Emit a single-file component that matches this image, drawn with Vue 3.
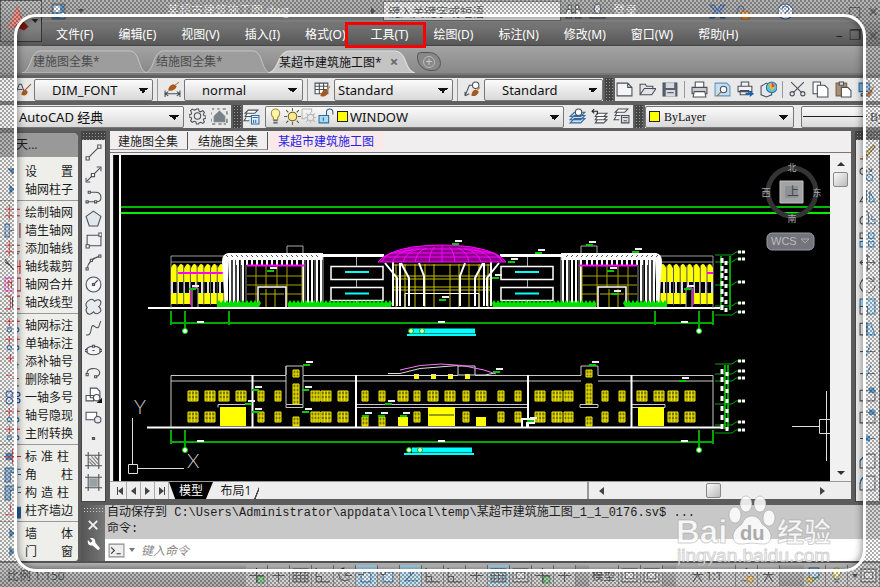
<script setup>
import { h, ref } from 'vue'

const D = '#4a4f58'
const B = '#1d78c4'
// Each glyph is a list of [path, stroke, fill] on a 16 by 16 grid.
const glyphs = {
  abrush: [['M1 11L4 3h2l3 8M3 8h4', D, 'none'], ['M15 3L9 9', '#9a5a20', 'none'], ['M10 8q-4 1-4 5q5 2 6-3z', 'none', '#a8581c']],
  dim: [['M1 9v6M15 9v6M1 12h14M4 10l-3 2 3 2M12 10l3 2-3 2', D, 'none'], ['M14 1L9 5', '#b9803a', 'none'], ['M9 3q-5 1-5 6q6 1 8-4z', 'none', '#a8581c']],
  table: [['M1 2h12v10H1zM1 5h12M1 8h12M5 2v10M9 2v10', D, '#fff'], ['M15 5l-4 5', '#b9803a', 'none'], ['M11 8q-4 1-5 6q6 2 7-4z', 'none', '#a8581c']],
  leader: [['M1 14L5 4h4M1 14v-4M1 14l4-2', D, 'none'], ['M8 4a3 3 0 1 0 6 0a3 3 0 1 0-6 0', D, '#fff'], ['M15 6l-4 4', '#b9803a', 'none'], ['M11 8q-4 1-4 6q5 1 7-4z', 'none', '#a8581c']],
  fresh: [['M1 2h10l4 4v8H1zM11 2v4h4', D, '#f4f5f8']],
  open: [['M1 13V3h5l1 2h6v3M1 13l4-6h11l-4 6z', D, '#e2e4e8']],
  save: [['M1 2h13v12H1z', D, '#59616e'], ['M4 2h7v4H4zM4 9h8v5H4z', '#d5dae3', '#d5dae3'], ['M5 11h6', D, 'none']],
  print: [['M4 6V1h8v5', D, '#fff'], ['M1 6h14v6H1z', D, '#c8ccd2'], ['M3 10h10l1 5H2z', D, '#fff']],
  preview: [['M1 2h11l3 3v9H1z', '#6b93b8', '#c3dff2'], ['M6 8a3 3 0 1 0 6 0a3 3 0 1 0-6 0', D, '#eef6ff'], ['M7 10l-4 4', '#9a6a30', 'none']],
  publish: [['M4 5V1h7v4M1 5h13v5H1zM3 9h8v4H3z', D, '#f1f2f4'], ['M8 11h4V9l4 3-4 3v-2H8z', 'none', '#1761b2']],
  globe: [['M1 5l5-3 5 3v8l-5 2-5-2z', D, '#e6e9ec'], ['M6 6a5 5 0 1 0 10 0a5 5 0 1 0-10 0', '#28729d', '#62c2da'], ['M8 3l4-1 2 4-3 3z', 'none', '#f2bd24'], ['M11 1l3 4-3 1z', 'none', '#de4432']],
  cut: [['M2 1l10 10M14 1L4 11', D, 'none'], ['M1 12a2 2 0 1 0 4 0a2 2 0 1 0-4 0M11 12a2 2 0 1 0 4 0a2 2 0 1 0-4 0', D, 'none']],
  copy: [['M1 1h7v11H1z', D, '#fff'], ['M5 4h7l3 3v8H5z', D, '#fff']],
  paste: [['M1 2h10v12H1z', '#7a6249', '#a68f72'], ['M4 1h4v3H4z', D, '#ddd'], ['M6 6h6l3 3v6H6z', D, '#fff']],
  match: [['M1 2h10v8H1z', '#2e6aa8', '#7fb2df'], ['M3 12h8v2H3z', D, '#ddd'], ['M15 5l-5 7', '#a8581c', 'none'], ['M12 8q-4 2-4 7q5-1 6-6z', 'none', '#a8581c']],
  gear: [['M7 1h2l.5 2 1.5.6L13 2.500l1.500 1.500-1 2 .5 1 2 .5v2l-2 .5-.5 1 1 2-1.500 1.500-2-1-1.500.5L9 15H7l-.5-2-1.500-.5-2 1L1.500 12l1-2L2 9l-2-.5v-2L2 6l.5-1.500-1-2L3 1l2 1 1.500-.5z', D, 'none'], ['M5 7.500a3 3 0 1 0 6 0a3 3 0 1 0-6 0', D, 'none']],
  house: [['M3 8l5-5 5 5v5H3z', '#7a8189', '#7a8189'], ['M1 1h2M6 1h2M11 1h3M0 4v2M0 10v3M15 3v3M15 10v4M1 15h3M7 15h3M12 15h2', D, 'none']],
  layers: [['M5 2h9l-3 3H2zM4 5l-2 3h6M3 9l-2 3h5', D, '#fff'], ['M8 7h7v8H8z', '#2d6da8', '#e7f2fc'], ['M9 9h5M10 11v3M12 11v3', '#2d6da8', 'none']],
  bulb: [['M4 5a4 4 0 1 1 8 0q0 2-2 4v2H6V9Q4 7 4 5z', '#9b8a47', '#fff6a0'], ['M6 12h4M6 14h4', D, 'none']],
  sun: [['M4 8a4 4 0 1 0 8 0a4 4 0 1 0-8 0', '#6c6230', '#ffe98a'], ['M8 0v3M8 13v3M0 8h3M13 8h3M2 2l2 2M12 12l2 2M14 2l-2 2M2 14l2-2', '#6c6230', 'none']],
  freeze: [['M1 1h9v3M1 1v9h3', '#b6b6b6', 'none'], ['M6 9a3 3 0 1 0 6 0a3 3 0 1 0-6 0M9 4v2M9 12v2M4 9h2M12 9h2M5 5l2 2M13 5l-2 2M5 13l2-2M13 13l-2-2', '#b6b6b6', 'none']],
  lock: [['M1 7h9v7H1z', '#2f6f9f', '#a9dbf4'], ['M8 7V4q0-3 3-3t3 3v2M5 9v3', '#2f5f80', 'none']],
  stackA: [['M5 10h10l-4 4H1zM5 7h10l-4 4H1zM5 4h10l-4 4H1z', '#38689b', '#bfe0f7'], ['M6 4a3 3 0 1 0 6 0a3 3 0 1 0-6 0', D, '#fff']],
  stackB: [['M6 11h9l-3 3H4zM6 8h9l-3 3H4zM6 5h9l-3 3H4z', D, '#fff'], ['M1 3h5v3M3 1L1 3l2 2', '#222', 'none']],
  stackC: [['M5 1h9l-3 3H2zM4 4l-2 3h5M3 8l-2 3h5', D, '#fff'], ['M8 7h7v7H8zM9 9h5M10 12h3', D, '#ddd']],
  line: [['M3 13L13 3', D, 'none'], ['M1 12h3v3H1zM12 1h3v3h-3z', D, '#fff']],
  xline: [['M2 14L14 2M1 11v4h4M11 1h4v4', D, 'none'], ['M6 7h3v3H6z', D, '#fff']],
  pline: [['M2 13h8M4 4h6q5 0 5 5q0 4-4 4', D, 'none'], ['M1 12h2v2H1zM9 12h2v2H9zM3 3h2v2H3z', D, '#fff']],
  polygon: [['M8 1l7 5-3 9H4L1 6z', D, '#e2e7ec']],
  rect: [['M2 3h13v10H2z', D, '#eef0f2'], ['M1 12h3v3H1zM13 1h3v3h-3z', D, '#fff']],
  arc: [['M2 14Q3 5 14 2', D, 'none'], ['M1 13h2v2H1zM5 5h2v2H5zM13 1h2v2h-2z', D, '#fff']],
  circle: [['M1 8a7 7 0 1 0 14 0a7 7 0 1 0-14 0', D, '#f3f5f6'], ['M8 8l4-4M7 7h2v2H7z', D, 'none']],
  cloud: [['M4 2q3-2 5 1q5-3 6 1q0 3-2 4q4 4 0 6q-3 2-5-1q-4 4-6 1q-2-3 0-5q-3-4 2-7z', D, '#e8ebee']],
  spline: [['M1 14C8 16 4 2 9 6S13 4 15 1', D, 'none']],
  ellipse: [['M1 8a7 4 0 1 0 14 0a7 4 0 1 0-14 0', D, '#f3f5f6'], ['M7 3h2v2H7zM0 7h2v2H0zM14 7h2v2h-2zM7 8h2', D, '#fff']],
  earc: [['M2 9a6 4 0 1 1 8 3', D, 'none'], ['M1 9h2v2H1zM9 11h2v2H9z', D, '#fff']],
  block: [['M5 2h6l3 3v6H5zM1 9h7v5H1z', D, '#fff'], ['M8 11a3 3 0 1 0 6 0a3 3 0 1 0-6 0', D, '#fff'], ['M16 11v5h-5z', 'none', '#111']],
  mblock: [['M1 4h10v7H1z', D, '#fff'], ['M9 11a3 3 0 1 0 6 0a3 3 0 1 0-6 0', D, '#e8ebee']],
  point: [['M7 7h2v2H7z', D, '#888']],
  hatch: [['M3 0v16M13 0v16M0 3h16M0 13h16', D, 'none'], ['M4 6l6 6M4 9l4 4M6 4l6 7M9 4l4 4', '#777', 'none']],
  grad: [['M3 0v16M13 0v16M0 3h16M0 13h16', D, 'none'], ['M4 4h8v8H4z', 'none', '#9ba0a5']],
  erase: [['M14 1L6 9l2 2 7-8z', '#7a6423', '#f4d479'], ['M1 14h6M4 12l2-2 2 2-2 2z', '#9a4b23', '#e39a71']],
  copyObj: [['M1 5a3 3 0 1 0 6 0a3 3 0 1 0-6 0M9 2l3 3M12 2v3H9', D, 'none'], ['M7 11a3 3 0 1 0 6 0a3 3 0 1 0-6 0', B, '#d6ecfb']],
  mirror: [['M7 3v10H1z', D, 'none'], ['M10 3v10h5z', B, '#d6ecfb']],
  offset: [['M1 10q0-4 4-4V3q4-4 4 3v7H5q-4 1-4-3z', D, 'none'], ['M8 13h7V9h-3V5', B, 'none']],
  array: [['M1 1h5v5H1z', D, 'none'], ['M9 1h5v5H9zM1 9h5v5H1zM9 9h5v5H9z', B, '#d6ecfb']],
  move: [['M8 1v14M1 8h14M6 3l2-2 2 2M6 13l2 2 2-2M3 6L1 8l2 2M13 6l2 2-2 2', D, 'none']],
  rotate: [['M13 4A7 7 0 1 0 15 9M14 1v4h-4', D, 'none']],
  scale: [['M1 1h14v14H8V8H1z', B, '#c5e5fa'], ['M1 8h7v7H1z', D, '#fff']],
  stretch: [['M1 3h6v11H1z', D, '#fff'], ['M8 3h3l4 11H8z', B, '#c5e5fa']],
  trim: [['M1 9h14', D, 'none'], ['M11 1L6 15', B, 'none']],
  breakAt: [['M1 4h14v10H1z', D, 'none'], ['M10 2h4v4h-4z', B, B]],
  chamfer: [['M1 15V8l6-6h8v13z', D, 'none'], ['M1 8l6-6', B, 'none']],
  fillet: [['M1 15V9q1-7 7-7h7v13z', D, 'none'], ['M1 9q1-7 7-7', B, 'none']],
  join: [['M1 8h5M11 8h4', D, 'none'], ['M6 6h4v4H6z', B, B]],
  axis: [['M1 5h14M1 11h14M5 1v14M11 1v14', '#e0202c', 'none']],
  axisAdd: [['M1 5h14M1 11h14M5 1v14', '#e0202c', 'none'], ['M11 1v14M9 13h5', '#208040', 'none']],
  wall: [['M1 2h4v12H1z', '#245f9d', '#b9d3ea'], ['M6 8h6M10 6v4M15 1v14', '#9a2a30', 'none']],
  knife: [['M1 1l8 10M1 4l5 3', '#222', 'none'], ['M12 2v13M15 2v13M10 8h6', '#e0202c', 'none']],
  merge: [['M1 2h9v12H1z', '#ff20e0', 'none'], ['M4 4v8M7 4v8M3 6h5M12 2h4v12h-4z', '#e0202c', 'none']],
  shift: [['M1 2h5v12H1M10 2h5M10 14h5', '#e0202c', 'none'], ['M8 3v10', '#222', 'none']],
  dimax: [['M5 1v8M12 1v8M1 4h14', '#e0202c', 'none'], ['M3 12a2 2 0 1 0 4 0a2 2 0 1 0-4 0M10 12a2 2 0 1 0 4 0a2 2 0 1 0-4 0', '#1d68a8', '#d8ecff']],
  plus: [['M6 1v8M2 5h9', '#f01020', 'none'], ['M10 11h4M12 9v6', '#208040', 'none']],
  minus: [['M2 4h5M8 7h6', '#f01020', 'none'], ['M11 9v5h3', '#208040', 'none']],
  multi: [['M2 5a3 3 0 1 0 6 0a3 3 0 1 0-6 0M2 11a3 3 0 1 0 6 0a3 3 0 1 0-6 0M11 5a2 2 0 1 0 4 0a2 2 0 1 0-4 0M11 11a2 2 0 1 0 4 0a2 2 0 1 0-4 0', '#143f9c', '#dbe8ff']],
  col: [['M2 5h5v6H2z', '#1d68a8', '#1d68a8'], ['M8 1v14M0 8h16', '#f01020', 'none']],
  corner: [['M1 2h11v4H6v9H1z', '#1d5d9c', '#7da8ce'], ['M13 3h3M13 8h3', '#1d5d9c', 'none']],
  align: [['M1 12h9V9', '#f01020', 'none'], ['M6 2v7', '#f01020', 'none'], ['M12 5h4v10h-4z', '#1d5d9c', '#1d5d9c']],
  tri: [['M5 3l5 5-5 5z', 'none', '#2867a8']],
  trid: [['M3 5h9l-4 6z', 'none', '#2867a8']],
  plusS: [['M8 1v14M1 8h14', '#333', 'none'], ['M9 9h6v6H9z', '#26823a', '#7cbf7c']],
  cross: [['M8 2v12M2 8h12', '#333', 'none']],
  grid: [['M1 2h14v12H1zM1 5h14M1 8h14M1 11h14M4 2v12M8 2v12M12 2v12', '#444', 'none']],
  ortho: [['M2 1v13h13M2 9h5v5', '#333', 'none']],
  polar: [['M8 1a6 6 0 1 0 5 10M8 8l6-6M8 8h7', '#333', 'none']],
  snap: [['M3 5h9v9H3z', '#1d68a8', '#cce9fb'], ['M1 3h4v4H1z', '#333', '#fff']],
  angle: [['M14 2L3 13h12', '#1d68a8', 'none'], ['M3 3h5v4', '#333', 'none']],
  quick: [['M1 2h14v12H1z', '#444', '#e4e4e4'], ['M4 5h8v6H4z', '#444', 'none']],
  person: [['M8 2v5L4 14M8 7l4 7M3 7h10', '#333', 'none']],
  star: [['M8 1l3 5M5 6l3-5M3 13h6', '#555', 'none'], ['M9 9h5v5H9z', '#d48b20', '#f6c15f']],
  sheet: [['M3 1h9v9H3z', '#245f9d', '#b8d7ef'], ['M2 11l4 3 7-7', '#28a038', 'none'], ['M1 10h5v4H1z', '#b58b1a', '#f1cf55']],
  find: [['M2 6h4v8H1V9zM10 6h4l1 3v5h-5zM6 9h4', '#3a3f48', '#eee'], ['M3 2h3v4H3zM10 2h3v4h-3z', '#3a3f48', '#eee']],
  user: [['M5 5a3 4 0 1 1 6 0q0 4-2 5l6 2v2H1v-2l6-2Q5 9 5 5z', '#3a3f48', '#dfe6f2']],
  exchange: [['M1 2h4l3 5 3-5h4l-5 6 5 6h-4l-3-4-3 4H1l5-6z', '#244a86', '#5b8ccb']],
  lockA: [['M2 13L6 3h3l3 9', '#244a86', 'none'], ['M8 8h7v7H8z', '#b95a10', '#f38d26'], ['M11 10v3', '#fff', 'none']],
  help: [['M1 8a7 7 0 1 0 14 0a7 7 0 1 0-14 0', '#244a86', '#f0f5fd'], ['M5 6q0-3 3-3t3 3q0 1-3 3v1M8 12v1', '#1f5fc4', 'none']],
  wrench: [['M2 2l3 3 2-2-3-3q6-1 6 5l5 6-2 2-6-5q-6 1-5-6z', 'none', '#fff']],
  shut: [['M3 3l9 9M12 3l-9 9', '#eee', 'none']],
  prompt: [['M1 2h14v12H1z', '#8a8a8a', '#eee'], ['M3 5l3 3-3 3M8 11h4', '#333', 'none']],
  doc: [['M2 1h12v14H2z', '#555', '#2b70ae'], ['M4 3h5v5H4z', '#fff', '#fff'], ['M10 10h3v3h-3z', '#fff', '#fff']]
}

const Icon = (p) =>
  h('svg', { class: 'icon', viewBox: '0 0 16 16', 'aria-hidden': 'true' },
    (glyphs[p.name] || []).map(([d, stroke, fill]) => h('path', { d, stroke, fill })))
Icon.props = ['name']

const menus = ['文件(F)', '编辑(E)', '视图(V)', '插入(I)', '格式(O)', '工具(T)', '绘图(D)', '标注(N)', '修改(M)', '窗口(W)', '帮助(H)']
const styles = [
  ['abrush', 'DIM_FONT', '文字样式'], ['dim', 'normal', '标注样式'],
  ['table', 'Standard', '表格样式'], ['leader', 'Standard', '多重引线样式']
]
const fileTools = [['fresh', 'open', 'save'], ['print', 'preview', 'publish', 'globe'], ['cut', 'copy', 'paste', 'match']]
const palette = [
  [['trid', '设 置'], ['tri', '轴网柱子']],
  [['axis', '绘制轴网'], ['wall', '墙生轴网'], ['axisAdd', '添加轴线'], ['knife', '轴线裁剪'], ['merge', '轴网合并'], ['shift', '轴改线型']],
  [['dimax', '轴网标注'], ['dimax', '单轴标注'], ['plus', '添补轴号'], ['minus', '删除轴号'], ['multi', '一轴多号'], ['dimax', '轴号隐现'], ['dimax', '主附转换']],
  [['col', '标 准 柱'], ['corner', '角 柱'], ['corner', '构 造 柱'], ['align', '柱齐墙边']],
  [['tri', '墙 体'], ['tri', '门 窗']]
]
const drawTools = ['line', 'xline', 'pline', 'polygon', 'rect', 'arc', 'circle', 'cloud', 'spline', 'ellipse', 'earc', 'block', 'mblock', 'point', 'hatch', 'grad']
const editTools = ['erase', 'copyObj', 'mirror', 'offset', 'array', 'move', 'rotate', 'scale', 'stretch', 'trim', 'trim', 'breakAt', 'breakAt', 'join', 'chamfer', 'fillet']
const statusA = ['plusS', 'cross', 'grid', 'ortho', 'polar', 'snap', 'snap', 'angle', 'ortho', 'ortho', 'cross', 'grid', 'quick', 'plusS', 'cross']
const active = [5, 7, 11]
const command = ref('')
const search = ref('')

// Front elevation, left half; the right half is its mirror image about x = 442.
const bays = Array.from({ length: 8 }, (_, i) => 171 + i * 6.7)
const scallop = 'M171 304V293H225V304zM171 282V268' + bays.map((x) => `Q${x + 3.3} 260 ${x + 6.7} 268`).join('') + 'V282z'
const posts = Array.from({ length: 9 }, (_, i) => 172 + i * 6).map((x) => `M${x} 282v11`).join('')
const mullions = bays.map((x) => `M${x + 6} 265v40`).join('')
const teeth = Array.from({ length: 13 }, (_, i) => `M${237 + i * 5} 259v6`).join('')
const shafts = [227, 230, 234, 238, 243, 303, 308, 312, 317, 321].map((x) => `M${x} 260v45`).join('')
const notches = Array.from({ length: 19 }, (_, i) => `M${226 + i * 5} 255l2 2`).join('')
const hedge = (a, b) => {
  let d = `M${a} 307`
  for (let x = a; x < b; x += 4) d += `L${x} 303L${x + 2} 300L${x + 4} 303`
  return d + `L${b} 307z`
}
const domeRibs = [-56, -46, -36, -25, -12, 0, 12, 25, 36, 46, 56].map((x) => `M${442 + x * 0.62} ${246 + Math.abs(x) / 12}Q${442 + x} 251 ${442 + x * 1.08} 262`).join('')

// Rear elevation windows: [x, width].
const upper = [[188, 10], [205, 10], [219, 10], [236, 10], [258, 6], [275, 6], [311, 9], [321, 10], [338, 10], [362, 6], [379, 6], [398, 10], [414, 6], [428, 10], [445, 10], [463, 6], [476, 10], [498, 6], [515, 6], [535, 10], [552, 10], [564, 9], [602, 6], [619, 6], [637, 10], [654, 10], [668, 10], [685, 10]]
const lower = upper.filter(([x]) => ![219, 236, 362, 379, 398, 428, 445, 476, 637, 654].includes(x))
const pane = (x, y, w, hh) => {
  const n = w > 8 ? 3 : 2
  let d = `M${x} ${y}h${w}v${hh}h${-w}z`
  for (let i = 1; i < n; i++) d += `M${x + (w * i) / n} ${y}v${hh}`
  for (let j = 1; j < hh / 4; j++) d += `M${x} ${y + j * 4}h${w}`
  return d
}
const windows = upper.map(([x, w]) => pane(x, 391, w, 10)).join('') +
  lower.map(([x, w]) => pane(x, 412, w, 10)).join('') +
  [293, 586].map((x) => pane(x, 370, 6, 7) + pane(x, 384, 6, 20) + pane(x, 417, 6, 9)).join('') +
  pane(362, 417, 6, 9) + pane(379, 417, 6, 9)
const marks = [[455, 241], [538, 250], [589, 242], [635, 249], [511, 259], [495, 275], [442, 297], [270, 268], [610, 268], [192, 286], [687, 286], [614, 291],
  [306, 362], [255, 387], [305, 387], [248, 401], [388, 401], [255, 409], [305, 409], [365, 413], [381, 413], [403, 413], [592, 362], [496, 369], [682, 378], [530, 418]]
const levels = [252, 259, 282, 303, 312, 361, 371, 378, 401, 422, 430]
const dimTexts = [258, 266, 273, 281, 289, 297, 305, 369, 377, 386, 396, 406, 415, 424]
</script>

<template>
  <div class="app">
    <header class="head">
      <button class="logo" aria-label="应用程序菜单">
        <svg viewBox="0 0 42 42" aria-hidden="true">
          <path d="M17 5L7 30l10-4 10 3z" fill="#c93a2c" />
          <path d="M17 5l5 17-15 8z" fill="#e8685a" />
          <path d="M22 20l7 7-5 4-10-5z" fill="#7d1710" />
          <path d="M32 19h7l-3 4z" fill="#222" />
        </svg>
      </button>
      <div class="title">
        <Icon name="doc" /><span class="drop dark"></span>
        <h1>某超市建筑施工图.dwg</h1>
        <span class="play"></span>
        <input v-model="search" class="search" placeholder="键入关键字或短语" aria-label="搜索" />
        <Icon name="find" /><Icon name="user" />
        <a class="login" href="#">登录</a>
        <Icon name="exchange" /><Icon name="lockA" /><Icon name="help" class="helpicon" />
        <span class="win"><button aria-label="最大化">□</button><button aria-label="关闭">×</button></span>
      </div>
      <nav class="menu">
        <button v-for="m in menus" :key="m" :class="{ marked: m === '工具(T)' }"><span>{{ m }}</span></button>
        <span class="win"><button aria-label="最小化">–</button><button aria-label="还原">❐</button><button aria-label="关闭图形">×</button></span>
      </nav>
    </header>

    <div class="files">
      <button v-for="(t, i) in ['建施图全集*', '结施图全集*', '某超市建筑施工图*']" :key="t" class="file" :class="{ on: i === 2 }">
        <svg viewBox="0 0 125 24" preserveAspectRatio="none" aria-hidden="true">
          <path d="M0 24Q5 23 8 14Q12 1 18 1H108Q114 1 117 12Q120 23 125 24z" />
        </svg>
        <span>{{ t }}</span><b v-if="i === 2">×</b>
      </button>
      <button class="add" aria-label="新建选项卡"><i>+</i></button>
    </div>

    <div class="bars">
      <div class="bar">
        <div class="seg first">
          <label v-for="(s, i) in styles" :key="i" class="pick">
            <Icon :name="s[0]" />
            <select :aria-label="s[2]" :class="{ flush: i === 2 }"><option>{{ s[1] }}</option></select>
          </label>
        </div>
        <i class="grip"></i>
        <div class="seg grow tools">
          <span v-for="(g, i) in fileTools" :key="i" class="group">
            <button v-for="n in g" :key="n" :aria-label="n"><Icon :name="n" /></button>
          </span>
        </div>
      </div>
      <div class="bar">
        <div class="seg second">
          <select class="space" aria-label="工作空间"><option>AutoCAD 经典</option></select>
          <button aria-label="工作空间设置"><Icon name="gear" /></button>
          <button aria-label="我的工作空间"><Icon name="house" /></button>
        </div>
        <i class="grip"></i>
        <div class="seg layerseg">
          <button aria-label="图层特性"><Icon name="layers" /></button>
          <span class="over">
            <select class="layer" aria-label="图层"><option>WINDOW</option></select>
            <span class="lay"><Icon name="bulb" /><Icon name="sun" /><Icon name="freeze" /><Icon name="lock" /><i class="chip"></i></span>
          </span>
          <button aria-label="置为当前"><Icon name="stackA" /></button>
          <button aria-label="上一个图层"><Icon name="stackB" /></button>
          <button aria-label="图层状态"><Icon name="stackC" /></button>
        </div>
        <i class="grip"></i>
        <div class="seg grow props">
          <span class="over">
            <select class="color" aria-label="颜色"><option>ByLayer</option></select>
            <span class="lay"><i class="chip"></i></span>
          </span>
          <span class="over stretch">
            <select class="ltype" aria-label="线型"><option>ByLayer</option></select>
            <span class="lay"><i class="stroke"></i></span>
          </span>
        </div>
      </div>
    </div>

    <main class="work">
      <aside class="palette">
        <h2>天...</h2>
        <div v-for="(g, i) in palette" :key="i" class="pgroup">
          <button v-for="p in g" :key="p[1]"><Icon :name="p[0]" /><span :class="{ three: p[1].length === 5 }">{{ p[1] }}</span></button>
        </div>
      </aside>

      <div class="center">
        <div class="upper">
          <div class="vtools">
            <i class="hgrip"></i>
            <button v-for="n in drawTools" :key="n" :aria-label="n"><Icon :name="n" /></button>
          </div>

          <section class="doc">
            <div class="dtabs">
              <button>建施图全集</button><button>结施图全集</button><button class="on">某超市建筑施工图</button>
            </div>
            <div class="view">
              <div class="canvas">
                <svg class="drawing" viewBox="121 155 709 324" role="img" aria-label="某超市建筑施工图">
                  <path d="M121 207h709" stroke="#00b800" stroke-width="2" />
                  <path d="M121 213h709" stroke="#00f000" stroke-width="2" />
                  <path d="M148 308h574" stroke="#fff" stroke-width="2" />

                  <g v-for="side in [0, 1]" :key="side" :transform="side ? 'translate(884 0) scale(-1 1)' : undefined">
                    <path d="M171 308V256H225M171 262H225" stroke="#9a9a9a" />
                    <path :d="scallop" fill="#ff0" />
                    <path :d="posts" stroke="#ddd" stroke-width="2" />
                    <path :d="mullions" stroke="#555" />
                    <path v-if="!side" d="M178 273H224" stroke="#f0f" stroke-width="2" />
                    <path v-else d="M171 273h6" stroke="#f0f" stroke-width="2" />
                    <path d="M192 307V288h6v19" fill="#000" stroke="#bbb" />
                    <path d="M191.500 307V289l5-2" stroke="#f0f" />
                    <path d="M287 253v-7h16v7" stroke="#aaa" />
                    <path d="M222 262q0-8 6-9h95v7H229l-2 46h-2z" fill="#fff" />
                    <path :d="notches" stroke="#555" />
                    <path :d="shafts" stroke="#fff" stroke-width="2" />
                    <path d="M232 260v46M236 260v46M241 260v46M305 260v46M315 260v46M246 265v41" stroke="#888" />
                    <path :d="teeth" stroke="#fff" stroke-width="2" />
                    <path d="M247 276h55M247 285h55M247 294h55M256 266v40M266 266v40M277 266v40M287 266v40M302 266v40" stroke="#a8a000" />
                    <path d="M247 265.500h58" stroke="#f0f" stroke-width="2" />
                    <path d="M258 307V287h28v20" fill="#000" stroke="#fff" stroke-width="1.500" />
                    <path d="M266 289v18M275 289v18M260 294h24" stroke="#b8b000" />
                    <path d="M322 255.500h62" stroke="#fff" stroke-width="3" />
                    <path d="M323 257v50M356.500 257v50" stroke="#aaa" />
                    <path d="M331 266.500h52v13h-52zM331 287.500h52v13h-52z" fill="#000" stroke="#fff" stroke-width="1.500" />
                    <path d="M345 272h24M345 293.500h24" stroke="#0ff" stroke-width="2" />
                    <path :d="hedge(288, 391)" fill="#00e000" />
                    <path :d="hedge(217, 259)" fill="#00e000" />
                    <path d="M393 276h49M393 265h49M393 279h49M393 287h49M393 290h49M396 264v43M405 264v43M415 264v43M425 264v43M434 264v43" stroke="#c8c000" />
                    <path d="M405 307V293.500h37" stroke="#fff" />
                    <path d="M393 306V262M397 306v-28l-12-15M409 306v-28l-8-15M424 306v-30l-5-13M400 263v43" stroke="#fff" stroke-width="2" />
                  </g>

                  <path d="M378 262Q385 252 412 247Q442 243 472 247Q500 252 506 262z" fill="#8a008a" stroke="#f0f" />
                  <path :d="domeRibs" stroke="#f0f" />
                  <path d="M391 253H493M384 257H501M404 249H480" stroke="#f0f" />

                  <g stroke="#00a800" stroke-width="2">
                    <path d="M171 323H714M171 311v14M185 311v18M229 311v14M655 311v14M699 311v18M713 311v14" />
                    <path d="M171 442H714M171 430v14M185 430v18M699 430v18M713 430v14" />
                    <path d="M721 256v54M730 256v54M725 365v64M728 365v64" />
                    <path v-for="y in levels" :key="y" :d="`M715 ${y + 3}h17l4-3h7`" stroke-width="1" />
                  </g>
                  <g v-for="y in [331, 450]" :key="y">
                    <circle v-for="x in [185, 699]" :key="x" :cx="x" :cy="y" r="2.500" fill="#fff" stroke="#0d0" />
                    <path :d="`M197 ${y - 9}h7M438 ${y - 9}h7M681 ${y - 9}h7`" stroke="#fff" stroke-width="2" />
                  </g>
                  <path d="M411 331h64M412 450h60" stroke="#0ff" stroke-width="5" />
                  <path d="M407 335h69M404 454h70" stroke="#0ff" stroke-width="2" />
                  <circle v-for="c in [[411, 331], [422, 331], [409, 450], [420, 450]]" :key="c.join()" :cx="c[0]" :cy="c[1]" r="2.500" fill="#dfd" stroke="#0b0" />

                  <path d="M171 427V375.500H286V366h17v9.500h84M475 375.500H581V366h17v9.500H713V427M171 381H286M303 381H581M598 381H713M356 404.500H528M356 407.500H528M218 407.500v-3h34M632 404.500h33v3h-33M286 366v9M286 404.500h17v3h-17zM580 404.500h18v3h-18zM286 376v28M303 376v28" stroke="#c8c8c8" />
                  <path d="M147 427.500H722M252.500 375v52M356 375v52M528 375v52M631.500 375v52" stroke="#fff" stroke-width="2" />
                  <path :d="windows" stroke="#f6ee00" fill="#7a7400" />
                  <path d="M220 407h26v19h-26zM638 407h26v19h-26zM428 407h27v19h-27zM398 417h10v9h-10zM476 417h10v9h-10zM414 374h5v5h-5zM431 374h5v5h-5zM448 374h5v5h-5zM465 374h5v5h-5z" fill="#ff0" />
                  <path d="M429 415h25" stroke="#333" />
                  <path d="M388 373.500h12l20-5 38-3M458 375v-9h17v9zM387 375.500h71M475 375h10l10-2" stroke="#ddd" />
                  <path d="M400 370Q440 358 484 370L496 374" stroke="#f7f" />
                  <path d="M522 427v-8h12v4h-7v4" stroke="#fff" stroke-width="2" />

                  <g v-for="m in marks" :key="m.join()">
                    <path :d="`M${m[0] - 3} ${m[1] + 3}h7`" stroke="#0c0" stroke-width="2" />
                    <path :d="`M${m[0]} ${m[1]}h7`" stroke="#eee" stroke-width="2" />
                  </g>
                  <path v-for="y in levels" :key="'l' + y" :d="`M738 ${y}h7`" stroke="#fff" stroke-width="3" stroke-dasharray="3 1" />
                  <path v-for="y in dimTexts" :key="'d' + y" :d="`M722 ${y}v5M${y > 350 ? 727 : 726} ${y + 3}v4`" stroke="#fff" stroke-width="3" />

                  <g stroke="#ddd">
                    <path d="M132.500 418v46M138 468.500h46M128.500 464.500h9v9h-9z" />
                    <path d="M792 426.500h27M826.500 391v70M819.500 419.500h14v14h-14z" />
                  </g>
                  <text x="134" y="414" class="axis">Y</text>
                  <text x="187" y="468" class="axis">X</text>

                  <circle cx="792" cy="192" r="24" stroke="#343434" stroke-width="5" />
                  <path d="M780 181h23v22h-23z" fill="#a3a3a3" stroke="#c2c2c2" />
                  <path d="M785 186h13v12h-13z" fill="#8d9096" />
                  <g class="compass">
                    <text x="792" y="171">北</text><text x="817" y="196">东</text>
                    <text x="792" y="222">南</text><text x="766" y="196">西</text>
                    <text x="793" y="196" class="top">上</text>
                  </g>
                  <rect x="767" y="233" width="47" height="17" rx="5" fill="#74747e" stroke="#9898a2" />
                  <text x="771" y="245" class="wcs">WCS</text>
                  <path d="M801 239h8l-4 4z" stroke="#aaa" />
                </svg>
              </div>
              <div class="vscroll"><i class="up"></i><i class="thumb"></i><i class="down"></i></div>
            </div>
            <div class="sheets">
              <button class="nav" aria-label="第一个"><i class="bar1"></i><i class="lf"></i></button>
              <button class="nav" aria-label="上一个"><i class="lf"></i></button>
              <button class="nav" aria-label="下一个"><i class="rt"></i></button>
              <button class="nav" aria-label="最后一个"><i class="rt"></i><i class="bar1"></i></button>
              <button class="model">模型</button><button class="layout">布局1</button>
              <div class="hscroll"><i class="lf"></i><i class="thumb"></i><i class="rt"></i></div>
            </div>
          </section>

          <div class="vtools edit">
            <i class="hgrip"></i>
            <button v-for="(n, i) in editTools" :key="i" :aria-label="n"><Icon :name="n" /></button>
          </div>
        </div>

        <section class="cmd">
          <div class="cside">
            <i class="hgrip"></i>
            <button aria-label="关闭命令行"><Icon name="shut" /></button>
            <button aria-label="自定义"><Icon name="wrench" /></button>
          </div>
          <div class="cbody">
            <p>自动保存到 C:\Users\Administrator\appdata\local\temp\某超市建筑施工图_1_1_0176.sv$ ...</p>
            <p>命令:</p>
            <label class="cline"><Icon name="prompt" /><span class="drop"></span>
              <input v-model="command" placeholder="键入命令" aria-label="命令" /></label>
          </div>
        </section>
      </div>
    </main>

    <footer class="status">
      <span class="scale">比例 1:150</span>
      <div class="stools">
        <button v-for="(n, i) in statusA" :key="i" :class="{ lit: active.includes(i) }" :aria-label="n"><Icon :name="n" /></button>
      </div>
      <div class="stools"><button class="wide">模型</button><button aria-label="快速查看布局"><Icon name="quick" /></button><button aria-label="快速查看图形"><Icon name="quick" /></button></div>
      <div class="stools"><button class="ratio"><Icon name="person" />1:1</button><button aria-label="注释可见性"><Icon name="star" /></button><button aria-label="自动缩放"><Icon name="person" /></button></div>
      <div class="stools last"><button aria-label="硬件加速"><Icon name="sheet" /></button><button aria-label="隔离对象"><Icon name="bulb" /></button><span class="drop dark"></span><button aria-label="全屏显示"><Icon name="quick" /></button></div>
    </footer>

    <svg class="brand" viewBox="0 0 166 76" role="img" aria-label="Baidu 经验">
      <g fill="#fff" fill-opacity=".85" stroke="#888" stroke-opacity=".4">
        <text x="2" y="49" class="bai">Bai</text>
        <ellipse cx="61" cy="21" rx="6" ry="8" /><ellipse cx="72" cy="10" rx="6" ry="8" />
        <ellipse cx="86" cy="10" rx="6" ry="8" /><ellipse cx="95" cy="24" rx="6" ry="8" />
        <path d="M78 22q-7 0-10 8-9 6-9 12 0 9 10 8 9-2 18 0 10 1 10-8 0-6-9-12-3-8-10-8z" />
        <text x="103" y="48" class="jy">经验</text>
        <text x="3" y="68" class="url">jingyan.baidu.com</text>
      </g>
      <text x="66" y="46" class="du">du</text>
    </svg>

    <svg class="mesh" aria-hidden="true">
      <defs>
        <pattern id="cells" width="4" height="4" patternUnits="userSpaceOnUse">
          <path d="M0 0h4v4H0z" fill="#fff" fill-opacity=".28" />
          <path d="M0 0h2v2H0zM2 2h2v2H2z" fill="#000" fill-opacity=".32" />
        </pattern>
        <mask id="rim"><rect class="all" fill="#fff" /><rect class="hole" x="15" y="15" rx="21" fill="#000" /></mask>
      </defs>
      <rect class="all" fill="url(#cells)" mask="url(#rim)" />
    </svg>
    <div class="frame"></div>
  </div>
</template>

<style>
body { overflow: hidden; background: #5c5c5c; }
</style>

<style scoped>
.app { position: relative; display: flex; flex-direction: column; min-height: 100vh; overflow: hidden; background: #5c5c5c; color: #1c1c1c; font: 12px/16px "Open Sans", "Noto Sans CJK SC", sans-serif; }
* { box-sizing: border-box; }
button { padding: 0; border: 0; background: none; color: inherit; font: inherit; white-space: nowrap; }
h1, h2, p { margin: 0; font: inherit; }
i { font-style: normal; }
.icon { display: block; flex: none; width: 17px; height: 17px; stroke-width: 1; }

.head { display: grid; grid-template: 22px 24px / 42px 1fr; background: linear-gradient(#9d9d9d, #898989 22px, #7b7b7b 22px, #555); }
.logo { grid-row: 1 / 3; height: 42px; border: 1px solid #333; background: linear-gradient(#aaa, #6c6c6c); }
.logo svg { display: block; width: 40px; height: 40px; }
.title { display: flex; align-items: center; padding-left: 8px; color: #eee; }
.title h1 { margin: 0 82px 0 83px; color: #eee; }
.drop { flex: none; margin-left: 4px; border: 3px solid transparent; border-top: 4px solid #777; border-bottom: 0; }
.drop.dark { border-top-color: #222; }
.play { margin-right: 8px; border: 4px solid transparent; border-left: 4px solid #222; border-right: 0; }
.search { width: 178px; height: 20px; margin-right: 4px; padding: 0 4px; border: 1px solid #666; background: #ececec; font: 12px/16px "Noto Sans CJK SC", sans-serif; }
.search::placeholder { color: #444; }
.title .icon { margin-right: 7px; }
.login { margin-right: 72px; color: #f4f4f4; text-decoration: none; }
.title .helpicon { margin-left: 20px; }
.win { display: flex; gap: 6px; margin-left: auto; padding-right: 1px; color: #222; font: 14px/16px "DejaVu Sans", sans-serif; }
.menu { display: flex; align-items: center; gap: 25px; padding: 3px 0 0 14px; border-bottom: 1px solid #444; color: #fff; font-family: "Noto Sans", "Noto Sans CJK SC", sans-serif; }
.menu > button { position: relative; }
.menu > button span { position: relative; }
.marked::before { content: ""; position: absolute; inset: -5px -18px -5px -26px; border: 3px solid #f00; background: linear-gradient(#737373, #585858); }

.files { display: flex; height: 29px; padding: 4px 0 0 22px; border-bottom: 2px solid #777; background: linear-gradient(#a3a3a3, #888); }
.file { position: relative; width: 125px; height: 23px; margin-right: -2px; padding-left: 11px; color: #4b4b4b; text-align: left; }
.file svg { position: absolute; inset: 0; width: 100%; height: 100%; fill: #9d9d9d; stroke: #c6c6c6; }
.file span, .file b { position: relative; }
.file b { margin-left: 8px; color: #666; font-size: 15px; }
.file.on { width: 147px; color: #111; }
.file.on svg { fill: #c4c4c4; stroke: #ddd; }
.add { width: 24px; height: 19px; margin: 2px 0 0 4px; border: 1px solid #555; border-radius: 4px 12px 8px 14px; background: #888; color: #ccc; }
.add i { display: block; width: 12px; height: 12px; margin: 0 auto; border: 1px solid #bbb; border-radius: 50%; line-height: 9px; }

.bars { display: flex; flex-direction: column; gap: 4px; padding: 3px 0; background: #606060; }
.bar { display: flex; height: 23px; }
.seg { display: flex; flex: none; align-items: center; background: #e9e9e9; }
.seg.grow { flex: 1; min-width: 0; overflow: hidden; }
.seg button { display: grid; place-items: center; }
.first { padding-left: 14px; }
.pick { display: flex; align-items: center; }
.pick .icon { margin: 0 2px 0 1px; }
.pick + .pick { margin-left: 4px; padding-left: 5px; border-left: 1px solid #999; }
.pick + .pick .icon { margin-right: 3px; }
select { width: 119px; height: 22px; padding: 0 16px 0 17px; border: 1px solid #777; border-radius: 2px; appearance: none; background: linear-gradient(135deg, #111 50%, transparent 50%) right 4px top 8px / 5px 5px no-repeat, linear-gradient(225deg, #111 50%, transparent 50%) right 9px top 8px / 5px 5px no-repeat, linear-gradient(#fbfbfb, #d9d9d9); color: #111; font: 13px/18px "Noto Sans", "Noto Sans CJK SC", sans-serif; }
select.flush { padding-left: 3px; }
.grip, .hgrip { flex: none; background: radial-gradient(circle, #999 1px, transparent 1px) 0 0 / 3px 3px, #444; }
.grip { width: 8px; margin: 0 2px; }
.hgrip { height: 8px; align-self: stretch; }
.tools { padding-left: 1px; }
.group { display: flex; gap: 6px; padding-right: 5px; }
.group + .group { padding-left: 6px; border-left: 1px solid #999; }
.second { padding-left: 14px; width: 231px; gap: 5px; }
.second .space { width: 170px; padding-left: 4px; }
.layerseg { width: 390px; gap: 5px; }
.over { position: relative; display: flex; }
.lay { position: absolute; left: 2px; top: 2px; display: flex; align-items: center; height: 18px; pointer-events: none; }
.layerseg .layer { width: 299px; padding-left: 84px; }
.chip { width: 11px; height: 11px; margin-left: 2px; border: 1px solid #222; background: #ff0; }
.props { gap: 7px; }
.color { width: 149px; padding-left: 18px; font: 12px/18px "Liberation Serif", serif; }
.stretch { flex: 1; }
.ltype { flex: none; width: 149px; padding-left: 68px; font: 12px/18px "Liberation Serif", serif; }
.stroke { width: 64px; height: 1px; background: #222; }

.work { display: flex; gap: 3px; flex: 1; min-height: 0; }
.palette { display: flex; flex-direction: column; width: 78px; margin-top: 2px; border-radius: 0 5px 3px 0; background: #eeefeb; }
.palette h2 { padding: 4px 0 4px 16px; border-radius: 0 5px 0 0; background: #999; }
.pgroup { padding-top: 2px; }
.pgroup + .pgroup { margin-top: 2px; border-top: 1px solid #999; }
.palette h2 + .pgroup { padding-top: 5px; }
.palette button { display: flex; align-items: center; gap: 4px; width: 100%; height: 18px; padding-left: 4px; font-family: "Noto Sans CJK SC", sans-serif; }
.palette span { width: 48px; text-align-last: justify; }
.palette span.three { width: 44px; }
.center { display: flex; flex: 1; flex-direction: column; gap: 3px; min-width: 0; }
.upper { display: flex; flex: 1; gap: 4px; }
.vtools { display: flex; flex: none; flex-direction: column; align-items: center; width: 25px; border: 1px solid #444; background: #eee; }
.vtools button { display: grid; place-items: center; height: 22px; }
.vtools .hgrip { margin-bottom: 1px; }
.doc { display: flex; flex: 1; flex-direction: column; min-width: 0; margin-bottom: 3px; background: #f0eeee; }
.dtabs { display: flex; gap: 2px; padding: 1px 0 2px; border-bottom: 1px solid #777; }
.dtabs button { height: 18px; padding: 0 9px 0 8px; border-right: 1px solid #555; border-bottom: 1px solid #999; font-family: "Noto Sans CJK SC", sans-serif; }
.dtabs .on { background: #fbe9e9; border: 0; color: #2222e8; }
.view { display: flex; flex: 1; min-height: 0; padding: 2px 0 0 3px; }
.canvas { flex: 1; min-width: 0; padding-left: 7px; border-left: 1px solid #222; background: linear-gradient(#fff, #fff) 5px 0 / 2px 100% no-repeat, #000; overflow: hidden; }
.drawing { display: block; width: 100%; fill: none; }
.axis { fill: #ccc; font: 20px "Lato", sans-serif; font-weight: 300; }
.compass { fill: #aaa; font: 9px "Noto Sans CJK SC", sans-serif; text-anchor: middle; }
.compass .top { fill: #444; font-size: 12px; }
.wcs { fill: #bbb; font: 11px "Liberation Sans", sans-serif; }
.vscroll { display: flex; flex-direction: column; align-items: center; width: 21px; padding: 6px 0; background: #f1f1f1; }
.up, .down { border: 4px solid transparent; }
.up { margin-top: -3px; border-bottom-color: #333; }
.down { margin-top: auto; margin-bottom: -4px; border-top-color: #333; }
.thumb { width: 15px; height: 15px; border: 1px solid #888; border-radius: 2px; background: linear-gradient(135deg, #fafafa, #bbb); }
.vscroll .thumb { margin-top: 6px; }
.sheets { display: flex; height: 18px; padding-left: 3px; border-top: 1px solid #999; background: #eee; }
.nav { display: flex; align-items: center; justify-content: center; width: 14px; border-right: 1px solid #aaa; }
.lf, .rt { border: 4px solid transparent; }
.lf { margin-left: -4px; border-right: 5px solid #444; }
.rt { margin-right: -4px; border-left: 5px solid #444; }
.bar1 { width: 1px; height: 8px; background: #444; }
.model { width: 44px; background: #000; color: #fff; clip-path: polygon(0 0, 100% 0, 84% 100%, 14% 100%); }
.layout { width: 46px; background: linear-gradient(112deg, transparent 90%, #444 91%, #444 93%, transparent 94%); }
.hscroll { display: flex; align-items: center; width: 264px; margin-left: auto; padding: 0 26px 0 10px; border-left: 2px solid #999; }
.hscroll .thumb { margin-left: 102px; }
.hscroll .rt { margin-left: auto; }

.cmd { display: flex; height: 56px; }
.cside { display: flex; flex-direction: column; align-items: center; gap: 5px; width: 24px; padding-top: 2px; background: linear-gradient(90deg, #555, #777); }
.cside .icon { width: 15px; height: 15px; stroke-width: 2; }
.cside .hgrip { height: 6px; margin: 0 2px; background: radial-gradient(circle, #ccc 1px, transparent 1px) 0 0 / 3px 3px; }
.cbody { flex: 1; min-width: 0; background: #c8c8c8; }
.cbody p { padding-left: 2px; overflow: hidden; font: 12px/15px "Liberation Mono", "Noto Sans CJK SC", monospace; white-space: nowrap; }
.cbody p:first-child { line-height: 17px; }
.cline { display: flex; align-items: center; height: 22px; margin-top: 2px; padding-left: 3px; background: #fff; }
.cline input { flex: 1; margin-left: 6px; padding: 0; border: 0; outline: 0; background: none; font: italic 12px/16px "Noto Sans CJK SC", sans-serif; }
.cline input::placeholder { color: #888; }

.status { display: flex; align-items: center; gap: 13px; height: 26px; padding-top: 1px; border-top: 2px solid #555; background: linear-gradient(#b9b9b9, #8c8c8c); }
.scale { width: 233px; padding-left: 7px; }
.stools { display: flex; flex: none; height: 21px; background: #c4c4c4; }
.stools button { display: flex; align-items: center; justify-content: center; width: 22px; border-right: 1px solid #777; }
.stools .lit { background: #aed8ef; }
.stools .wide { width: 30px; }
.stools .ratio { width: 60px; }
.last { align-items: center; margin-left: auto; }
.last button { height: 21px; }

.brand { position: absolute; right: 40px; bottom: 17px; width: 166px; height: 76px; pointer-events: none; }
.bai { font: bold 33px "Liberation Sans", sans-serif; }
.jy { font: bold 27px "Noto Sans CJK SC", sans-serif; }
.url { font: 19px "Liberation Sans", sans-serif; }
.du { fill: #aaa; font: bold 20px "Liberation Sans", sans-serif; }
.mesh { position: absolute; inset: 0; width: 100%; height: 100%; pointer-events: none; }
.all { width: 100%; height: 100%; }
.hole { width: calc(100% - 30px); height: calc(100% - 31px); }
.frame { position: absolute; inset: 14px 14px 15px 14px; border: 3px solid #fff; border-radius: 22px; box-shadow: inset 0 0 8px rgb(0 0 0 / 55%); pointer-events: none; }
</style>
